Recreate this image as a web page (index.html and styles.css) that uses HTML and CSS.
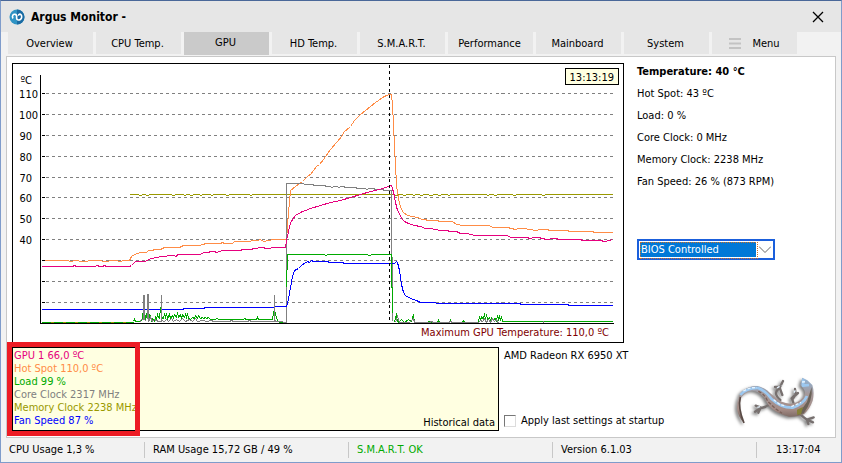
FILE: index.html
```
<!DOCTYPE html>
<html lang="en">
<head>
    <meta charset="UTF-8">
    <meta name="viewport" content="width=device-width, initial-scale=1.0">
    <title>Argus Monitor</title>
    <link rel="stylesheet" href="styles.css">
</head>
<body>
    <div class="window">
        <header class="title">
            <svg class="logo" width="16" height="16" viewBox="0 0 16 16">
                <circle cx="8" cy="8" r="7.500" fill="#2e93c4"/>
                <path d="M8 .5a7.500 7.500 0 0 1 0 15z" fill="#1a6ba3"/>
                <path d="M4 9.500C2.500 7 4.200 4.800 6.200 5.300S7.800 8 7.600 9.200 9.500 11.600 11.300 10.500 13 7 12 5.800 9.500 5 9.500 6.800" fill="none" stroke="#fff" stroke-width="1.600"/>
            </svg>
            <h1>Argus Monitor -</h1>
            <button class="close" aria-label="Close">
                <svg width="12" height="12" viewBox="0 0 12 12"><path d="M1 1l10 10M11 1L1 11" stroke="#000" stroke-width="1.300"/></svg>
            </button>
        </header>

        <nav class="tabs">
            <button>Overview</button>
            <button>CPU Temp.</button>
            <button class="active">GPU</button>
            <button>HD Temp.</button>
            <button>S.M.A.R.T.</button>
            <button>Performance</button>
            <button>Mainboard</button>
            <button>System</button>
            <button class="menu"><svg width="12" height="11" viewBox="0 0 12 11"><path d="M0 1h12M0 5.500h12M0 10h12" stroke="#c3c3c3" stroke-width="2"/></svg>Menu</button>
        </nav>

        <main class="panel">
            <div class="top">
                <div class="chart">
                    <svg viewBox="13 64 610 278">
                        <g class="lines" transform="translate(.5 .5)">
                            <path class="grid" d="M45 93H612M45 114H612M45 135H612M45 156H612M45 177H612M45 197H612M45 218H612M45 239H612M45 260H612M45 281H612M45 302H612"/>
                            <path class="mem" d="M129 194H138l1 1h2l1-1h3l1 1h2l1-1h22l1 1h2l1-1h8l1 1h1l1-1h3l1 1h2l1-1h6l1 1h1l1-1h8l1 1h1l1-1h12l1 1h2l1-1h20l1 1h1l1-1H394l1 1h2l1-1h4l1 1h2l1-1h6l1 1h1l1-1h4l1 1h2l1-1h5l1 1h3l1-1h4l1 1h2l1-1h6l1 1h1l1-1h36l1 1h1l1-1h4l1 1h2l1-1h15l1 1h2l1-1h25l1 1h2l1-1H612"/>
                            <path class="hot" d="M41 260H68l1 1h3l1-1h5l1 1h8l1-1h13l1 1h6l1-1h8l1 1h3l1-1H129L131 256L134 254L140 252H146L148 250H152L154 249H160L164 247H179L183 245H199L202 244L206 243H220L222 242L224 243H232L234 241H249L252 240H257L260 239L263 241L268 240L273 239H286L287 226L288 212L290 190L295 186L299 183L302 181L308 175L310 174L316 166L319 164L323 159L330 149L336 142L342 135L343 132L350 126L354 120L360 114L365 110L370 106L375 102L378 100L382 97L386 95L389 94H391L392 105L393 123L394 148L395 163L396 185L398 198L400 207L403 212L407 215L412 216L417 217L422 219L430 220H436L440 221H452L456 224L463 225H488L493 227H507L515 229L518 228H523L535 230L540 229H547L549 230H567L569 231H592L594 232H612"/>
                            <path class="core" d="M286 322V183H303l1 1h8l2 1h10l2 1h4l1 1h1l1-1h4l1 1h1l1-1h3l2 1h10l2 1h8l1 1h1l1-1h5l2 1h7l2 1H391V256L392 257V320"/>
                            <path class="gpu" d="M41 266H72L74 265L76 266H94L97 265L99 266H102L104 265L106 266H129L131 265L135 261H138L140 261H145L150 258L157 257L160 256L173 255L176 256L177 254H200L203 252H208L210 251H214L216 252L222 250H240L242 249H250L254 248L262 247L266 248L276 247H285L286 240L288 231L290 222L295 215L302 211L305 210L310 208L320 205L330 202L340 200L350 197L360 194L370 191L379 189L385 187L388 186L391 185L392 188L394 196L395 202L397 210L399 213L401 218L404 221L408 223L414 225L420 226L425 228L430 228L440 230H447L449 231H456L460 233H467L474 235H506L511 237H526L530 238L533 237H538L546 239L553 238H556L558 239H580L582 240H600L604 241L609 240L612 239"/>
                            <path class="fan" d="M41 309H182L184 308H203L205 307H272L275 306H286L288 299L290 287L292 276L294 270L298 268L302 264L304 263L307 261L309 262L311 260L313 261H327L329 262H342L344 263H394L396 261L397 262L399 270L401 284L403 292L405 295L410 298L416 300L420 302H434L437 303H519L521 304H567L569 305H612"/>
                            <path class="mem" d="M41 322H133"/>
                            <path class="load" stroke-dasharray="9 3" d="M41 322H133"/>
                            <path class="load" d="M133 321l1-2 1 2h5l2-2 1-12 1 3 1 9 2-8 1-4 1 13 1-5 1 5 1-2 2 3 1-4 1 2 1-5 1 3 1 1 1-11 1 10 2 1 1-4 1 3 1-4 1 5 2-4 1 4 2-3 1 2 1-3 2 3 1-5 1 5 2-3 1 4 1-4 2 3 1-3 1 3 1-4 1 5 2 1 2-2 2 1 1-3 2 3 1-3 2 3 2-1 1 1 2-1 1 1 2-1 2 2h5l1-1 3 1h24l1-1 2 1h10l1-2 1 2H272L273 313L274 308L275 314L277 320L279 322H284"/>
                            <path class="load" d="M286 286L287 254H324l1 1h1l1-1h40l1 1h2l1-1H391V287L392 287V312M394 322L396 313V318L398 322L401 319L404 322L408 319L411 321L413 314L414 322H427l2-1 2 1h6l1-2 1 2h10l1-2 1 2h10l2-2 1 2H478l1-6 1 4 1-4 2 3 1-6 1 6 1-5 1 5 2-2 1 3 1-3 2 2 2-1 1 3 1-6 1 4 1-3 1 4 1-4 1 5H612"/>
                            <path class="core" d="M139 322l2-3 2 0V294V318M144 294V318L145 321M147 318V294H148V321L150 317L152 321L154 319L158 321H161V294V320L164 321l2-2 2 2 3-3 2 3 3-2 3 2 3-3 3 3 4-2 3 2 3-3 2 3 5-1 5 1 3-1 4 1h15l2-1 2 1h14l2-1 2 1H274V294V320L276 321H281L284 322H286M395 322l2-6 2 6h10l4-4 1 4h15l2-1 2 1h15l2-1 2 1H478l2-2 2 1 2-3 2 4 2-3 2 3 2-4 2 3 2-2 2 4H501M543 322V320V322"/>
                            <path class="axis" d="M40 74V323H613M41 93h3M41 114h3M41 135h3M41 156h3M41 177h3M41 197h3M41 218h3M41 239h3M41 260h3M41 281h3M41 302h3"/>
                            <path class="marker" d="M389 64V323"/>
                            <rect class="time" x="565" y="68" width="53" height="16"/>
                        </g>
                        <g text-anchor="end">
                            <text x="32" y="84">ºC</text>
                            <text x="38" y="98">110</text>
                            <text x="38" y="119">100</text>
                            <text x="32" y="140">90</text>
                            <text x="32" y="161">80</text>
                            <text x="32" y="182">70</text>
                            <text x="32" y="202">60</text>
                            <text x="32" y="223">50</text>
                            <text x="32" y="244">40</text>
                            <text x="614" y="81">13:13:19</text>
                            <text class="max" x="609" y="336">Maximum GPU Temperature: 110,0 ºC</text>
                        </g>
                    </svg>
                </div>
                <div class="info">
                    <h2>Temperature: 40 °C</h2>
                    <p>Hot Spot: 43 ºC</p>
                    <p>Load: 0 %</p>
                    <p>Core Clock: 0 MHz</p>
                    <p>Memory Clock: 2238 MHz</p>
                    <p>Fan Speed: 26 % (873 RPM)</p>
                    <div class="select">
                        <select aria-label="Fan control">
                            <option>BIOS Controlled</option>
                            <option>Manual</option>
                        </select>
                        <svg width="12" height="7" viewBox="0 0 12 7"><path d="M0 .5l6 6 6-6" fill="none" stroke="#666"/></svg>
                    </div>
                </div>
            </div>

            <div class="bottom">
                <div class="history">
                    <ul class="legend">
                        <li class="c-gpu">GPU 1 66,0 ºC</li>
                        <li class="c-hot">Hot Spot 110,0 ºC</li>
                        <li class="c-load">Load 99 %</li>
                        <li class="c-core">Core Clock 2317 MHz</li>
                        <li class="c-mem">Memory Clock 2238 MHz</li>
                        <li class="c-fan">Fan Speed 87 %</li>
                    </ul>
                    <span>Historical data</span>
                </div>
                <div class="device">
                    <p>AMD Radeon RX 6950 XT</p>
                    <label><input type="checkbox">Apply last settings at startup</label>
                </div>
                <svg class="gecko" width="100" height="70" viewBox="0 0 300 210">
                    <defs>
                        <linearGradient id="skin" x1="0" y1="0" x2="0" y2="1">
                            <stop offset="0" stop-color="#8fb4d8"/>
                            <stop offset=".35" stop-color="#a59a9c"/>
                            <stop offset=".7" stop-color="#a58c86"/>
                            <stop offset="1" stop-color="#5e4f49"/>
                        </linearGradient>
                    </defs>
                    <g class="gecko-body">
                        <path d="M150 118Q130 118 120 126L104 130M108 128L92 122M106 130L90 140M106 130L100 143M166 105Q148 90 155 78L165 66M165 66L150 66M165 66L174 48M164 68L172 90M206 116L202 104 212 88M212 88L210 72M208 92L200 100M212 90L219 84M224 146Q236 158 246 164M246 164L266 157M246 164L264 172M246 164L250 177" fill="none" stroke="#77706f" stroke-width="7" stroke-linecap="round" stroke-linejoin="round"/>
                        <path d="M57 174Q38 155 36 130Q35 102 50 80Q70 62 98 63Q118 67 135 84L150 96Q168 114 196 116Q220 114 234 98Q245 86 236 72L226 60L232 38L247 46L262 60Q269 82 263 107Q254 132 238 146Q220 156 192 155Q162 148 143 133Q127 120 119 99Q105 80 82 77Q60 80 48 98Q38 128 57 174Z" fill="url(#skin)"/>
                        <path d="M46 96Q38 128 57 174" fill="none" stroke="#594a45" stroke-width="5"/>
                        <path d="M260 66Q264 108 236 145L217 151Q231 132 246 111Z" fill="#6b6258"/>
                        <path d="M216 134L234 126 228 148 216 149Z" fill="#858138"/>
                        <path d="M46 90Q64 68 99 69Q121 77 139 101Q169 129 203 128Q235 118 246 93M235 43L234 62 252 60" fill="none" stroke="#9cc8f0" stroke-width="8" stroke-linejoin="round"/>
                        <path d="M55 78Q75 66 96 68M146 104L165 119 182 123M199 125L228 112M231 51L244 50M156 69L169 61M207 83L211 76M97 127L108 124" fill="none" stroke="#e6f4ff" stroke-width="4" stroke-dasharray="9 5"/>
                        <path d="M100 79Q119 87 128 109L153 132 171 145" fill="none" stroke="#7b625b" stroke-width="4" stroke-dasharray="10 5"/>
                    </g>
                </svg>
            </div>
        </main>

        <footer class="status">
            <span>CPU Usage 1,3 %</span>
            <span>RAM Usage 15,72 GB / 49 %</span>
            <span class="ok">S.M.A.R.T. OK</span>
            <span>Version 6.1.03</span>
            <span>13:17:04</span>
        </footer>
    </div>
</body>
</html>
```
FILE: styles.css
```
* {
    margin: 0;
    padding: 0;
    box-sizing: border-box;
}
body, button, select {
    font-family: "DejaVu Sans Condensed", "Noto Sans", sans-serif;
    font-size: 11px;
    color: #000;
}
ul {
    list-style: none;
}
svg {
    display: block;
}
.window {
    min-height: 100vh;
    display: flex;
    flex-direction: column;
    background: #f2f2f2;
    border: 1px solid #7f9ccb;
    border-top-color: #4a6899;
}
.title {
    height: 31px;
    display: flex;
    align-items: center;
    padding: 0 17px 0 8px;
    background: #e6e6e6;
}
.title h1 {
    font-size: 12px;
    margin-left: 6px;
}
.close {
    margin-left: auto;
    border: none;
    background: none;
}
.tabs {
    height: 24px;
    display: flex;
    gap: 3px;
    padding: 0 7px;
    align-items: flex-start;
}
.tabs button {
    flex: 0 1 85px;
    height: 22px;
    padding-right: 2px;
    border: none;
    background: #e6e6e6;
}
.tabs .active {
    height: 23px;
    padding-bottom: 2px;
    background: #cacaca;
}
.tabs .menu {
    display: flex;
    align-items: center;
    justify-content: center;
    gap: 11px;
    padding-right: 0;
}
.panel {
    margin: 0 5px;
    padding: 6px 5px;
    background: #fff;
    border: 1px solid #c8c8c8;
}
.top {
    display: grid;
    grid-template-columns: minmax(0, 1fr) 193px;
    gap: 13px;
}
.chart {
    border: 1px solid #000;
    background: #fff;
}
.chart svg {
    width: 100%;
    height: auto;
}
.lines {
    fill: none;
    shape-rendering: crispEdges;
}
.grid {
    stroke: #808080;
    stroke-dasharray: 3 3;
}
.axis {
    stroke: #000;
}
.marker {
    stroke: #000;
    stroke-dasharray: 3 3;
}
.time {
    fill: #ffffe1;
    stroke: #000;
}
.gpu { stroke: #e6007e; }
.hot { stroke: #ff8c46; }
.load { stroke: #00aa00; }
.core { stroke: #808080; }
.mem { stroke: #999900; }
.fan { stroke: #0000ff; }
.max {
    fill: #800000;
}
.info {
    padding-top: 1px;
}
.info h2, .info p {
    font-size: 11px;
    line-height: 16px;
    margin-bottom: 6px;
}
.select {
    position: relative;
    width: 138px;
    margin-top: 49px;
}
.select select {
    display: block;
    width: 100%;
    height: 21px;
    padding: 0 22px 0 2px;
    appearance: none;
    border: 2px solid #1a5fdc;
    border-radius: 0;
    outline: none;
    color: #fff;
    background: linear-gradient(#0078d7, #0078d7) 1px 1px / 116px 15px no-repeat #fff;
}
.select::after {
    content: "";
    position: absolute;
    left: 3px;
    top: 3px;
    width: 116px;
    height: 15px;
    border: 1px dotted #d07020;
    pointer-events: none;
}
.select svg {
    position: absolute;
    right: 4px;
    top: 7px;
    pointer-events: none;
}
.bottom {
    display: flex;
    margin-top: 4px;
}
.history {
    flex: 0 1 487px;
    display: flex;
    justify-content: space-between;
    align-items: flex-end;
    border: 1px solid #000;
    background: #ffffe1;
}
.history span {
    padding-right: 3px;
    line-height: 15px;
}
/* highlighted box around the current values */
.legend {
    width: 123px;
    height: 84px;
    margin: -1px;
    padding: 1px;
    border: 1px solid #000;
    border-right: none;
    outline: 5px solid #ed1c24;
    line-height: 13px;
    white-space: nowrap;
}
.c-gpu { color: #e6007e; }
.c-hot { color: #ff8c46; }
.c-load { color: #00aa00; }
.c-core { color: #808080; }
.c-mem { color: #999900; }
.c-fan { color: #0000ff; }
.device {
    display: flex;
    flex-direction: column;
    justify-content: space-between;
    padding: 2px 0 2px 5px;
}
.device label {
    display: flex;
    align-items: center;
    gap: 5px;
    line-height: 16px;
}
.device input {
    appearance: none;
    width: 12px;
    height: 12px;
    border: 1px solid #dcdcdc;
    border-top-color: #777;
    border-left-color: #777;
    background: #fff;
}
.gecko {
    margin: 18px 5px -4px auto;
}
.gecko-body {
    filter: drop-shadow(-6px 5px 4px rgba(0, 0, 0, .5));
}
.status {
    flex: 1;
    min-height: 24px;
    display: grid;
    grid-template-columns: 144fr 204fr 204fr 204fr 84fr;
    align-items: center;
}
.status span {
    height: 16px;
    line-height: 16px;
    padding-left: 8px;
    border-right: 1px solid #c8c8c8;
}
.status span:last-child {
    padding-left: 19px;
    border-right: none;
}
.status .ok {
    color: #00aa00;
}
```
